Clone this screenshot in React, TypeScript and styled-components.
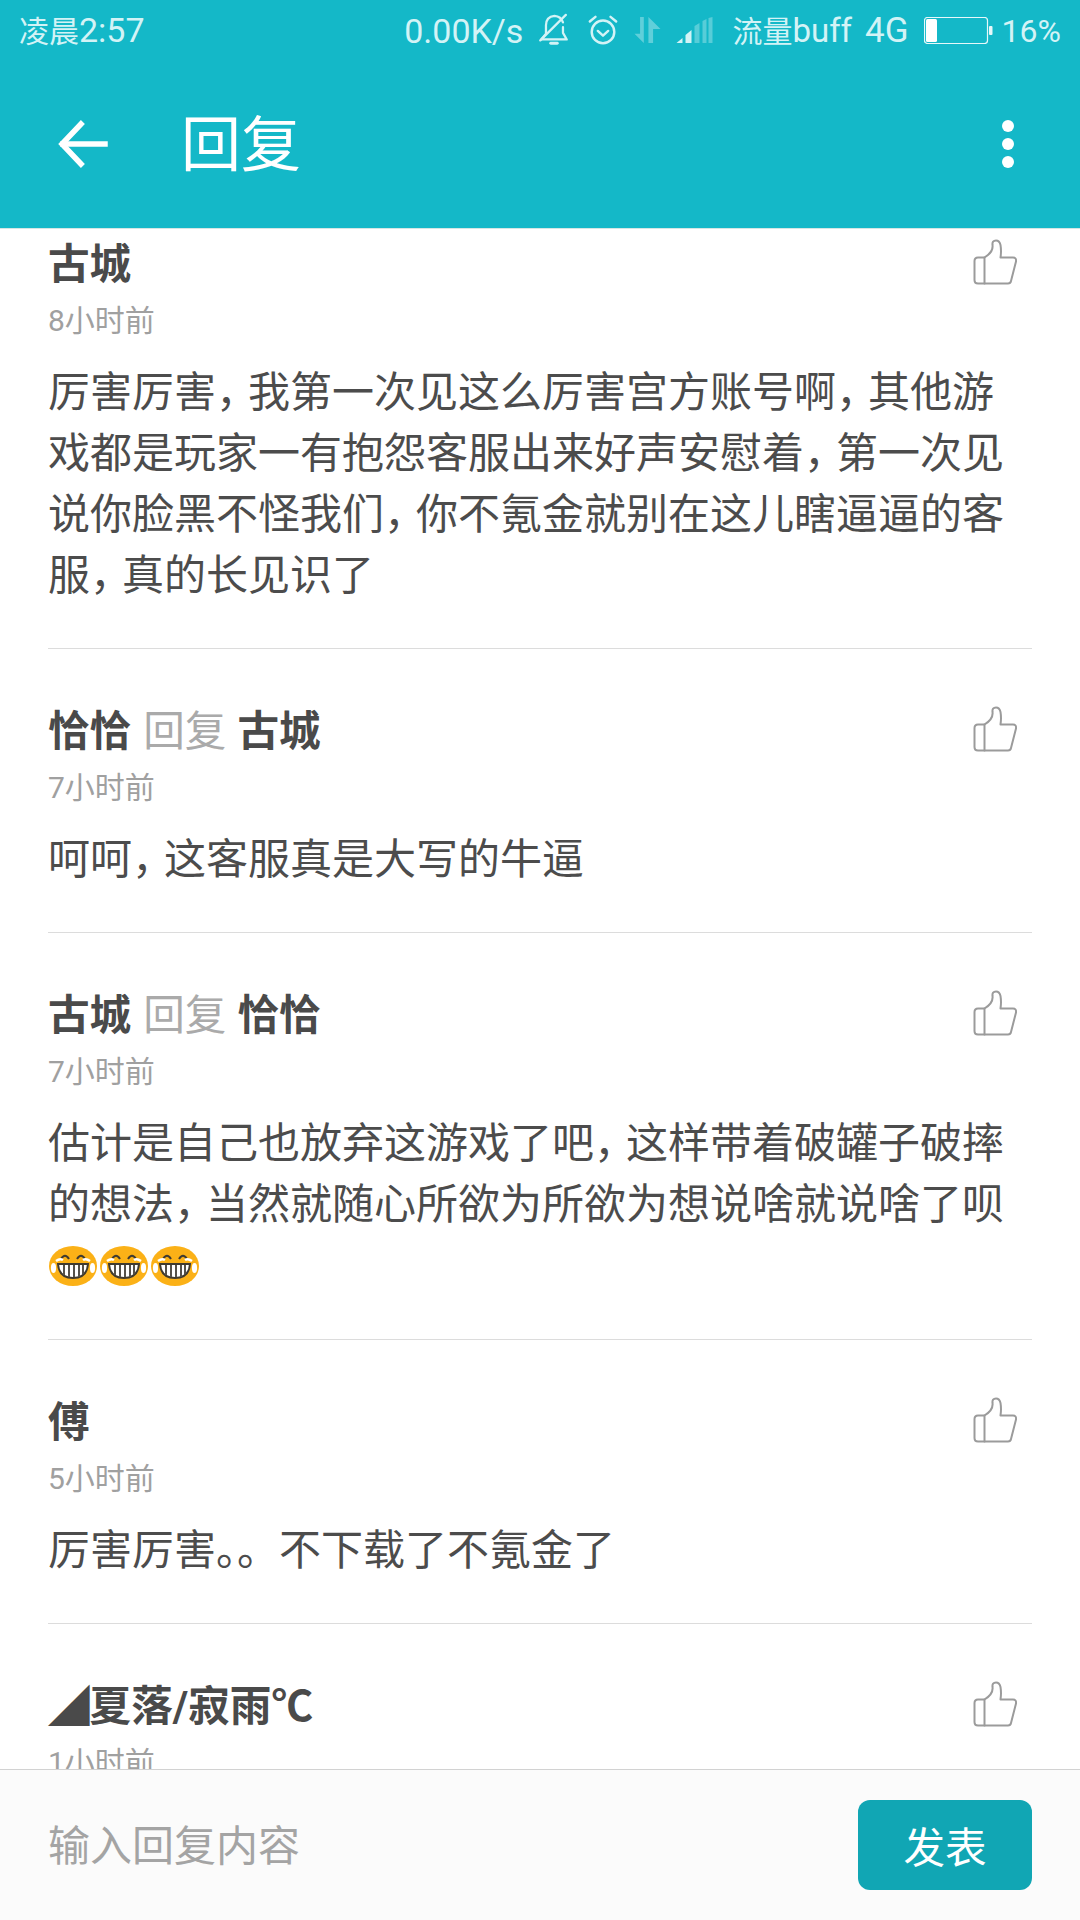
import React from "react";
import styled, { createGlobalStyle } from "styled-components";

const FONT = `Roboto, "Noto Sans CJK SC", sans-serif`;

const Global = createGlobalStyle`
  html, body { margin: 0; padding: 0; background: #fff; }
  * { box-sizing: border-box; }
`;

const Page = styled.div`
  width: 1080px;
  height: 1920px;
  display: flex;
  flex-direction: column;
  overflow: hidden;
  background: #fff;
  font-family: ${FONT};
`;

const Header = styled.header`
  flex: none;
  height: 229px;
  background: #14b8c8;
  border-bottom: 1px solid #d5e6e4;
  position: relative;
  z-index: 1;
`;

const StatusBar = styled.div`
  height: 60px;
  padding: 0 19px 0 19px;
  display: flex;
  align-items: center;
  justify-content: space-between;
  color: #d3f3f6;
  font-size: 33px;
  line-height: 60px;
`;

const Cjk = styled.span`
  font-size: 30px;
`;

const Clock = styled.span`
  font-size: 34px;
  margin-top: 2px;
`;

const StatusRight = styled.div`
  display: flex;
  align-items: center;
`;

const Speed = styled.span`
  font-size: 34px;
  margin: 2px 16px 0 0;
`;

const StatusIcon = styled.svg<{ $gap: number }>`
  display: block;
  flex: none;
  margin-right: ${(p) => p.$gap}px;
`;

const Carrier = styled.span`
  margin: 2px 13px 0 0;
`;

const Net = styled.span`
  font-size: 35px;
  margin: 2px 15px 0 0;
`;

const Percent = styled.span`
  font-size: 32px;
  margin: 2px 0 0 9px;
`;

const ActionBar = styled.div`
  height: 168px;
  display: flex;
  align-items: center;
  padding: 0 0 0 57px;
`;

const Title = styled.h1`
  margin: 3px auto 0 73px;
  font-size: 60px;
  font-weight: 400;
  line-height: 70px;
  color: #fff;
`;

const Dots = styled.div`
  width: 12px;
  margin-right: 66px;
  display: flex;
  flex-direction: column;
  gap: 6px;
`;

const Dot = styled.span`
  width: 12px;
  height: 12px;
  border-radius: 50%;
  background: #fff;
`;

const List = styled.main`
  flex: 1;
  min-height: 0;
  overflow: hidden;
  padding: 0 48px;
`;

const Item = styled.article<{ $first?: boolean }>`
  padding: ${(p) => (p.$first ? 6 : 53)}px 0 42px;
  border-bottom: 1px solid #dcdcdc;
  &:last-child {
    border-bottom: none;
  }
`;

const NameRow = styled.div`
  height: 60px;
  display: flex;
  align-items: center;
  justify-content: space-between;
  padding-right: 15px;
`;

const Names = styled.div`
  font-size: 41.6px;
  line-height: 60px;
  color: #4a4a4a;
  font-weight: 700;
  white-space: nowrap;
`;

const ReplyWord = styled.span`
  color: #aaaaaa;
  font-weight: 400;
  margin: 0 11px 0 12px;
`;

const ThumbSvg = styled.svg`
  display: block;
  flex: none;
  margin-bottom: 6px;
`;

const Time = styled.div`
  margin-top: 6px;
  height: 40px;
  font-size: 30px;
  line-height: 40px;
  color: #a0a0a0;
`;

const Body = styled.p`
  margin: 21px 0 0;
  font-size: 42px;
  line-height: 61px;
  color: #4c4c4c;
  min-height: 61px;
`;

const Comma = styled.span`
  font-feature-settings: "halt";
  letter-spacing: 11px;
`;

const Emojis = styled.span`
  display: flex;
  gap: 3px;
  height: 62px;
  padding: 11px 0 0 1px;
  align-items: flex-start;
`;

const Composer = styled.footer`
  flex: none;
  height: 151px;
  background: #fbfbfb;
  border-top: 1px solid #d2d2d2;
  padding: 30px 48px;
  display: flex;
  align-items: center;
  justify-content: space-between;
  position: relative;
  z-index: 1;
`;

const Input = styled.input`
  flex: 1;
  border: none;
  outline: none;
  background: transparent;
  padding: 2px 0 0;
  font-family: ${FONT};
  font-size: 42px;
  color: #444;
  &::placeholder {
    color: #a4a4a4;
    opacity: 1;
  }
`;

const Send = styled.button`
  flex: none;
  width: 174px;
  height: 90px;
  border: none;
  border-radius: 12px;
  background: #11a6b4;
  color: #fff;
  font-family: ${FONT};
  font-size: 41.6px;
  padding: 0;
`;

const ThumbIcon = () => (
  <ThumbSvg width="44" height="46" viewBox="0 0 44 46" fill="none" stroke="#9b9b9b" strokeWidth="2" strokeLinejoin="round" strokeLinecap="round">
    <path d="M11.5 18.5 H5 Q1.5 18.5 1.5 22 V41 Q1.5 44.5 5 44.5 H35 Q37.5 44.5 38 42 L43 22.5 Q43.5 18.5 40 18.5 H27.5 Q28.5 12 27.5 6 Q26.5 1.5 23 1.5 Q19 1.5 19.5 6 Q20.5 13 11.5 18.5 Z" />
    <path d="M11.5 18.5 V44.5" />
  </ThumbSvg>
);

const LaughEmoji = () => (
  <svg width="48" height="40" viewBox="0 0 48 40">
    <ellipse cx="24" cy="20" rx="24" ry="20" fill="#fbb117" />
    <path d="M12 13 Q16 6.5 20 13 M28 13 Q32 6.5 36 13" fill="none" stroke="#3f3a30" strokeWidth="2" />
    <path d="M9 18 H39 Q38 32 24 32 Q10 32 9 18 Z" fill="#fff" stroke="#3f3a30" strokeWidth="2" />
    <path d="M15 19 V29 M20 19 V31 M25 19 V31 M30 19 V31 M34 19 V28" stroke="#55514a" strokeWidth="2" />
    <ellipse cx="4.5" cy="22" rx="2.6" ry="5" fill="#fff" />
    <ellipse cx="43.5" cy="22" rx="2.6" ry="5" fill="#fff" />
    <path d="M7 15 Q11 12 14 14 M34 14 Q37 12 41 15" fill="none" stroke="#fff" strokeWidth="2.4" />
  </svg>
);

const withCommas = (text: string) =>
  text.split("，").flatMap((part, i) => (i === 0 ? [part] : [<Comma key={i}>，</Comma>, part]));

type Comment = { name: string; to?: string; time: string; body: string; emoji?: boolean };

const comments: Comment[] = [
  { name: "古城", time: "8小时前", body: "厉害厉害，我第一次见这么厉害宫方账号啊，其他游戏都是玩家一有抱怨客服出来好声安慰着，第一次见说你脸黑不怪我们，你不氪金就别在这儿瞎逼逼的客服，真的长见识了" },
  { name: "恰恰", to: "古城", time: "7小时前", body: "呵呵，这客服真是大写的牛逼" },
  { name: "古城", to: "恰恰", time: "7小时前", body: "估计是自己也放弃这游戏了吧，这样带着破罐子破摔的想法，当然就随心所欲为所欲为想说啥就说啥了呗", emoji: true },
  { name: "傅", time: "5小时前", body: "厉害厉害。。不下载了不氪金了" },
  { name: "◢夏落/寂雨℃", time: "1小时前", body: "" },
];

export default function App() {
  return (
    <Page>
      <Global />
      <Header>
        <StatusBar>
          <Clock>
            <Cjk>凌晨</Cjk>2:57
          </Clock>
          <StatusRight>
            <Speed>0.00K/s</Speed>
            <StatusIcon $gap={18} width="30" height="34" viewBox="0 0 31 36" fill="none" stroke="#d3f3f6" strokeWidth="2.4" strokeLinecap="round" strokeLinejoin="round">
              <path d="M7 22 V13 Q7 4 16 3 Q23 3.5 25 10 M25 15 V21 L29 28 H2 L7 22" />
              <path d="M1 29 L28 2" />
              <path d="M12 32 H19" strokeWidth="3" />
            </StatusIcon>
            <StatusIcon $gap={15} width="32" height="32" viewBox="0 0 32 34" fill="none" stroke="#d3f3f6" strokeWidth="2.6" strokeLinecap="round" strokeLinejoin="round">
              <circle cx="16" cy="19" r="12" />
              <path d="M10.5 18 L16 23 L21.5 18" />
              <path d="M2 8 L8 3 M30 8 L24 3" />
            </StatusIcon>
            <StatusIcon $gap={15} width="27" height="26" viewBox="0 0 28 28" fill="#d3f3f6" opacity="0.4">
              <path d="M6 0 H10 V28 L0 18 H6 Z" />
              <path d="M15 0 L28 13 H20 V28 H15 Z" />
            </StatusIcon>
            <StatusIcon $gap={19} width="37" height="26" viewBox="0 0 36 26" fill="#d3f3f6">
              <path d="M0 26 L6 21 V26 Z" />
              <path d="M9 18 L15 13 V26 H9 Z" />
              <path d="M18 9 L23 6 V26 H18 Z" opacity="0.35" />
              <path d="M26 4 L30 2 V26 H26 Z" opacity="0.35" />
              <path d="M32 1 L36 0 V26 H32 Z" opacity="0.35" />
            </StatusIcon>
            <Carrier>
              <Cjk>流量</Cjk>buff
            </Carrier>
            <Net>4G</Net>
            <svg width="69" height="27" viewBox="0 0 69 27" fill="none">
              <rect x="0.5" y="0.5" width="63" height="26" rx="3" stroke="#e6f8fa" strokeWidth="1.2" />
              <rect x="2" y="2" width="11" height="23" rx="1.5" fill="#fff" />
              <rect x="65" y="9" width="3.5" height="9" rx="1" fill="#e6f8fa" />
            </svg>
            <Percent>16%</Percent>
          </StatusRight>
        </StatusBar>
        <ActionBar>
          <svg width="51" height="50" viewBox="0 0 51 50" fill="none" stroke="#fff" strokeWidth="5.5" strokeLinecap="square">
            <path d="M48 25 H6" />
            <path d="M24 5 L5 25 L24 45" />
          </svg>
          <Title>回复</Title>
          <Dots>
            <Dot />
            <Dot />
            <Dot />
          </Dots>
        </ActionBar>
      </Header>
      <List>
        {comments.map((c, i) => (
          <Item key={i} $first={i === 0}>
            <NameRow>
              <Names>
                {c.name}
                {c.to && (
                  <>
                    <ReplyWord>回复</ReplyWord>
                    {c.to}
                  </>
                )}
              </Names>
              <ThumbIcon />
            </NameRow>
            <Time>{c.time}</Time>
            <Body>{withCommas(c.body)}</Body>
            {c.emoji && (
              <Emojis>
                <LaughEmoji />
                <LaughEmoji />
                <LaughEmoji />
              </Emojis>
            )}
          </Item>
        ))}
      </List>
      <Composer>
        <Input placeholder="输入回复内容" readOnly />
        <Send>发表</Send>
      </Composer>
    </Page>
  );
}
